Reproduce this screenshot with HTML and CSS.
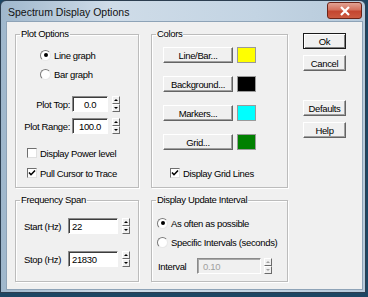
FILE: index.html
```html
<!DOCTYPE html>
<html lang="en">
<head>
    <meta charset="UTF-8">
    <title>Spectrum Display Options</title>
    <link rel="stylesheet" href="styles.css">
</head>
<body>

    <div class="window">
        <div class="titlebar">
            <span class="title">Spectrum Display Options</span>
            <span class="close">
                <svg viewBox="0 0 12 10" width="12" height="10">
                    <path d="M2 1l8 8M10 1l-8 8" stroke="#fff" stroke-width="2.2" fill="none"/>
                </svg>
            </span>
        </div>

        <div class="client">
            <div class="col col-left">
                <fieldset class="group plot">
                    <legend>Plot Options</legend>
                    <div class="radio-row first"><span class="radio checked"></span>Line graph</div>
                    <div class="radio-row second"><span class="radio"></span>Bar graph</div>
                    <div class="field-row top">
                        <span class="label">Plot Top:</span>
                        <span class="input center">0.0</span>
                        <span class="spin"><i class="up"></i><i class="down"></i></span>
                    </div>
                    <div class="field-row range">
                        <span class="label">Plot Range:</span>
                        <span class="input center">100.0</span>
                        <span class="spin"><i class="up"></i><i class="down"></i></span>
                    </div>
                    <div class="check-row power"><span class="check"></span>Display Power level</div>
                    <div class="check-row cursor">
                        <span class="check">
                            <svg viewBox="0 0 8 8" width="8" height="8"><path d="M1 3.5l2 2.2L7 1.5" stroke="#000" stroke-width="1.6" fill="none"/></svg>
                        </span>Pull Cursor to Trace
                    </div>
                </fieldset>

                <fieldset class="group freq">
                    <legend>Frequency Span</legend>
                    <div class="field-row start">
                        <span class="label">Start (Hz)</span>
                        <span class="input">22</span>
                        <span class="spin"><i class="up"></i><i class="down"></i></span>
                    </div>
                    <div class="field-row stop">
                        <span class="label">Stop (Hz)</span>
                        <span class="input">21830</span>
                        <span class="spin"><i class="up"></i><i class="down"></i></span>
                    </div>
                </fieldset>
            </div>

            <div class="col col-mid">
                <fieldset class="group colors">
                    <legend>Colors</legend>
                    <div class="color-row"><span class="button">Line/Bar...</span><span class="swatch yellow"></span></div>
                    <div class="color-row"><span class="button">Background...</span><span class="swatch black"></span></div>
                    <div class="color-row"><span class="button">Markers...</span><span class="swatch cyan"></span></div>
                    <div class="color-row"><span class="button">Grid...</span><span class="swatch green"></span></div>
                    <div class="check-row grid">
                        <span class="check">
                            <svg viewBox="0 0 8 8" width="8" height="8"><path d="M1 3.5l2 2.2L7 1.5" stroke="#000" stroke-width="1.6" fill="none"/></svg>
                        </span>Display Grid Lines
                    </div>
                </fieldset>

                <fieldset class="group update">
                    <legend>Display Update Interval</legend>
                    <div class="radio-row first"><span class="radio checked"></span>As often as possible</div>
                    <div class="radio-row second"><span class="radio"></span>Specific Intervals (seconds)</div>
                    <div class="field-row interval">
                        <span class="label">Interval</span>
                        <span class="input disabled">0.10</span>
                        <span class="spin disabled"><i class="up"></i><i class="down"></i></span>
                    </div>
                </fieldset>
            </div>

            <div class="col col-btns">
                <span class="button default">Ok</span>
                <span class="button cancel">Cancel</span>
                <span class="button defaults">Defaults</span>
                <span class="button help">Help</span>
            </div>
        </div>
    </div>

</body>
</html>
```

FILE: styles.css
```css
body {
    margin: 0;
    width: 368px;
    height: 297px;
    background-color: #1d4663;
    font-family: "Liberation Sans", Arial, sans-serif;
    font-size: 9.5px;
    letter-spacing: -0.35px;
    color: #000;
    overflow: hidden;
}

.window {
    width: 366px;
    height: 293px;
    box-sizing: border-box;
    border: 1px solid #2c3e50;
    border-radius: 6px 6px 0 0;
    background: linear-gradient(to right, #9fb7cc, #cfdce8 30%, #c3d4e3 70%, #b7cadb);
    padding: 0 3px 3px 6px;
}

.titlebar {
    height: 21px;
    display: flex;
    justify-content: space-between;
    align-items: flex-start;
}

.title {
    font-size: 10.5px;
    letter-spacing: 0;
    padding: 5px 0 0 1px;
    color: #111;
}

.close {
    width: 35px;
    height: 17px;
    margin-top: 1px;
    box-sizing: border-box;
    border: 1px solid #6b2418;
    border-radius: 3px;
    background: linear-gradient(#e2a293, #d4715d 45%, #c44630 55%, #cc5a40);
    display: flex;
    justify-content: center;
    align-items: center;
}

.client {
    width: 355px;
    height: 267px;
    background-color: #f0f0f0;
    box-shadow: 0 0 0 1px #8ea3b7;
    display: flex;
    align-items: flex-start;
    padding-left: 8px;
    box-sizing: border-box;
}

.col {
    display: flex;
    flex-direction: column;
}

.col-left {
    width: 124px;
    padding-top: 6px;
}

.col-mid {
    width: 137px;
    margin-left: 12px;
    padding-top: 6px;
}

.col-btns {
    width: 43px;
    margin-left: 15px;
    padding-top: 11px;
}

/* group boxes */
.group {
    margin: 0;
    padding: 0;
    min-width: 0;
    border: 1px solid #bcbcbc;
    box-shadow: inset 1px 1px 0 #fff, 1px 1px 0 #fff;
}

.group legend {
    margin-left: 4px;
    padding: 0 1px;
    line-height: 12px;
    height: 12px;
}

.plot {
    padding: 9px 0 8px 0;
}

.freq {
    margin-top: 6px;
    padding: 12px 0 14px 0;
}

.colors {
    padding: 7px 0 8px 0;
}

.update {
    margin-top: 6px;
    padding: 11px 0 7px 0;
}

/* rows */
.radio-row,
.check-row {
    height: 12px;
    display: flex;
    align-items: center;
    white-space: nowrap;
}

.field-row,
.color-row {
    height: 16px;
    display: flex;
    align-items: center;
    white-space: nowrap;
}

.plot .radio-row {
    padding-left: 24px;
}

.plot .radio-row.second {
    margin-top: 7px;
}

.plot .field-row.top {
    margin-top: 16px;
}

.plot .field-row.range {
    margin-top: 6px;
}

.plot .field-row .label {
    width: 54px;
    text-align: right;
    padding-right: 2px;
}

.plot .field-row .input {
    width: 36px;
}

.plot .check-row {
    padding-left: 11px;
}

.plot .check-row.power {
    margin-top: 13px;
}

.plot .check-row.cursor {
    margin-top: 8px;
}

.freq .field-row {
    padding-left: 8px;
}

.freq .field-row.stop {
    margin-top: 17px;
}

.freq .label {
    width: 44px;
}

.freq .input {
    width: 50px;
}

.colors .color-row {
    padding-left: 11px;
}

.colors .color-row + .color-row {
    margin-top: 13px;
}

.colors .check-row {
    padding-left: 18px;
    margin-top: 17px;
}

.update .radio-row {
    padding-left: 5px;
}

.update .radio-row.second {
    margin-top: 7px;
}

.update .field-row {
    padding-left: 6px;
    margin-top: 10px;
}

.update .label {
    width: 39px;
}

.update .input {
    width: 64px;
}

.update .spin {
    margin-left: 3px;
}

/* controls */
.label,
.input,
.spin,
.radio,
.check,
.button,
.swatch {
    flex-shrink: 0;
}

.radio {
    width: 11px;
    height: 11px;
    box-sizing: border-box;
    border-radius: 50%;
    border: 1px solid;
    border-color: #7a7a7a #e8e8e8 #e8e8e8 #7a7a7a;
    background-color: #fff;
    margin-right: 3px;
    display: flex;
    justify-content: center;
    align-items: center;
}

.radio.checked::after {
    content: "";
    width: 4px;
    height: 4px;
    border-radius: 50%;
    background-color: #000;
}

.check {
    width: 10px;
    height: 10px;
    box-sizing: border-box;
    border: 1px solid;
    border-color: #6f6f6f #e0e0e0 #e0e0e0 #6f6f6f;
    background-color: #fff;
    margin-right: 3px;
    display: flex;
    justify-content: center;
    align-items: center;
}

.input {
    height: 16px;
    box-sizing: border-box;
    border: 1px solid;
    border-color: #8a8a8a #fff #fff #8a8a8a;
    box-shadow: inset 1px 1px 0 #3c3c3c;
    background-color: #fff;
    padding: 1px 0 0 3px;
    line-height: 13px;
}

.input.center {
    text-align: center;
    padding-left: 0;
}

.input.disabled {
    background-color: #f0f0f0;
    color: #a0a0a0;
    box-shadow: inset 1px 1px 0 #a8a8a8;
    padding-left: 5px;
}

.spin {
    width: 8px;
    height: 16px;
    margin-left: 4px;
    display: flex;
    flex-direction: column;
}

.spin i {
    height: 8px;
    box-sizing: border-box;
    border: 1px solid;
    border-color: #fff #6a6a6a #6a6a6a #fff;
    background-color: #f0f0f0;
    display: flex;
    justify-content: center;
    align-items: center;
}

.spin i::after {
    content: "";
    border-left: 2px solid transparent;
    border-right: 2px solid transparent;
}

.spin .up::after {
    border-bottom: 2px solid #000;
}

.spin .down::after {
    border-top: 2px solid #000;
}

.spin.disabled .up::after {
    border-bottom-color: #a0a0a0;
}

.spin.disabled .down::after {
    border-top-color: #a0a0a0;
}

.button {
    height: 16px;
    box-sizing: border-box;
    border: 1px solid;
    border-color: #fff #646464 #646464 #fff;
    box-shadow: inset -1px -1px 0 #a0a0a0;
    background-color: #f0f0f0;
    display: flex;
    justify-content: center;
    align-items: center;
    white-space: nowrap;
}

.colors .button {
    width: 70px;
}

.swatch {
    width: 19px;
    height: 16px;
    margin-left: 4px;
    box-sizing: border-box;
    border: 1px solid #9a9a9a;
}

.yellow { background-color: #ffff00; }
.black { background-color: #000; }
.cyan { background-color: #00ffff; }
.green { background-color: #008000; }

.col-btns .button {
    width: 43px;
}

.button.default {
    border-color: #1a1a1a #1a1a1a #1a1a1a #1a1a1a;
    box-shadow: inset 1px 1px 0 #fff, inset -1px -1px 0 #808080;
}

.button.cancel {
    margin-top: 6px;
}

.button.defaults {
    margin-top: 29px;
}

.button.help {
    margin-top: 6px;
}
```
